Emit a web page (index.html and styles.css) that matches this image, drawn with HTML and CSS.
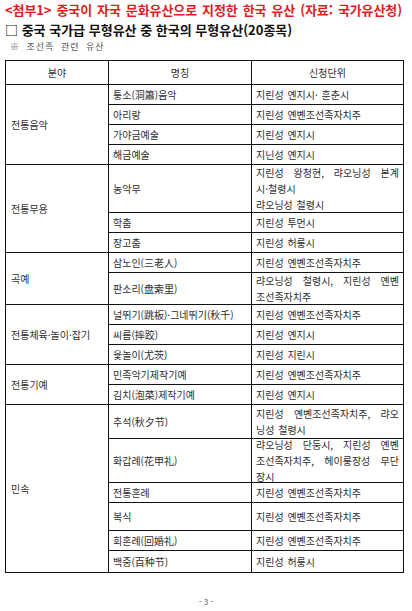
FILE: index.html
```html
<!DOCTYPE html>
<html lang="ko">
<head>
<meta charset="utf-8">
<link rel="stylesheet" href="styles.css">
</head>
<body>
<div class="page">
  <h1 class="title">&lt;첨부1&gt; 중국이 자국 문화유산으로 지정한 한국 유산 (자료: 국가유산청)</h1>
  <h2 class="sub">□ 중국 국가급 무형유산 중 한국의 무형유산(20종목)</h2>
  <p class="note">※ 조선족 관련 유산</p>
  <table class="heritage">
    <colgroup>
      <col class="c1">
      <col class="c2">
      <col class="c3">
    </colgroup>
    <thead>
      <tr class="hd"><th>분야</th><th>명칭</th><th>신청단위</th></tr>
    </thead>
    <tbody>
      <tr class="h20"><td rowspan="4" class="field">전통음악</td><td>퉁소(洞簫)음악</td><td>지린성 옌지시· 훈춘시</td></tr>
      <tr class="h20"><td>아리랑</td><td>지린성 옌볜조선족자치주</td></tr>
      <tr class="h20"><td>가야금예술</td><td>지린성 옌지시</td></tr>
      <tr class="h20"><td>해금예술</td><td>지닌성 옌지시</td></tr>

      <tr class="h48"><td rowspan="3" class="field">전통무용</td><td>농악무</td><td><div class="m1"><span class="j">지린성 왕청현, 랴오닝성 본계</span>시·철령시<br>랴오닝성 철령시</div></td></tr>
      <tr class="h20"><td>학춤</td><td>지린성 투먼시</td></tr>
      <tr class="h20"><td>장고춤</td><td>지린성 허룽시</td></tr>

      <tr class="h20"><td rowspan="2" class="field">곡예</td><td>삼노인(三老人)</td><td>지린성 옌볜조선족자치주</td></tr>
      <tr class="h32"><td>판소리(盘索里)</td><td><div class="m1"><span class="j">랴오닝성 철령시, 지린성 옌볜</span>조선족자치주</div></td></tr>

      <tr class="h20"><td rowspan="3" class="field">전통체육·놀이·잡기</td><td>널뛰기(跳板)·그네뛰기(秋千)</td><td>지린성 옌볜조선족자치주</td></tr>
      <tr class="h20"><td>씨름(摔跤)</td><td>지린성 옌지시</td></tr>
      <tr class="h20"><td>윷놀이(尤茨)</td><td>지린성 지린시</td></tr>

      <tr class="h20"><td rowspan="2" class="field">전통기예</td><td>민족악기제작기예</td><td>지린성 옌볜조선족자치주</td></tr>
      <tr class="h20"><td>김치(泡菜)제작기예</td><td>지린성 옌지시</td></tr>

      <tr class="h34"><td rowspan="6" class="field">민속</td><td>추석(秋夕节)</td><td><div class="m0"><span class="j">지린성 옌볜조선족자치주, 랴오</span>닝성 철령시</div></td></tr>
      <tr class="h44"><td>화갑례(花甲礼)</td><td><div class="m3"><span class="j">랴오닝성 단둥시, 지린성 옌볜</span><span class="j">조선족자치주, 헤이룽장성 무단</span>장시</div></td></tr>
      <tr class="h20"><td>전통혼례</td><td>지린성 옌볜조선족자치주</td></tr>
      <tr class="h28"><td>복식</td><td>지린성 옌볜조선족자치주</td></tr>
      <tr class="h20"><td>회혼례(回婚礼)</td><td>지린성 옌볜조선족자치주</td></tr>
      <tr class="h22"><td>백중(百种节)</td><td>지린성 허룽시</td></tr>
    </tbody>
  </table>
  <div class="pagenum">- 3 -</div>
</div>
</body>
</html>
```

FILE: styles.css
```css
html, body {
  margin: 0;
  padding: 0;
  background: #ffffff;
}

body {
  font-family: "Noto Sans CJK KR", "Noto Sans", sans-serif;
  color: #2a2a2a;
  width: 412px;
  height: 611px;
  overflow: hidden;
}

.page {
  padding: 0 0 0 5px;
}

.title {
  margin: 0;
  font-size: 13px;
  font-weight: 700;
  line-height: 20px;
  color: #e31b23;
  letter-spacing: -0.1px;
  word-spacing: 1.5px;
  white-space: nowrap;
}

.sub {
  margin: 0;
  font-size: 13px;
  font-weight: 700;
  line-height: 20px;
  color: #111111;
  white-space: nowrap;
}

.note {
  margin: 0;
  padding-left: 5px;
  font-size: 9px;
  line-height: 14px;
  color: #555555;
  letter-spacing: 1px;
  word-spacing: 3px;
}

.heritage {
  margin-top: 6px;
  width: 398px;
  border-collapse: collapse;
  table-layout: fixed;
}

.c1 { width: 103px; }
.c2 { width: 143px; }
.c3 { width: 152px; }

.heritage th,
.heritage td {
  border: 1px solid #111111;
  font-size: 10px;
  line-height: 16px;
  font-weight: 400;
  vertical-align: middle;
  padding: 0 4px;
  color: #2e2e2e;
  word-spacing: 1px;
}

.heritage th {
  text-align: center;
}

.heritage td {
  text-align: left;
}

.heritage td.field {
  padding-left: 5px;
}

.hd { height: 24px; }
.h20 { height: 20px; }
.h22 { height: 22px; }
.h28 { height: 28px; }
.h32 { height: 32px; }
.h34 { height: 34px; }
.h44 { height: 44px; }
.h48 { height: 48px; }

.m0 { margin: 0; }
.m1 { margin: -1px 0; }
.m3 { margin: -3px 0; }

.j {
  display: block;
  text-align: justify;
  text-align-last: justify;
}

.pagenum {
  margin-top: 22px;
  text-align: center;
  font-size: 8px;
  line-height: 14px;
  color: #555555;
  padding-right: 5px;
}
```
